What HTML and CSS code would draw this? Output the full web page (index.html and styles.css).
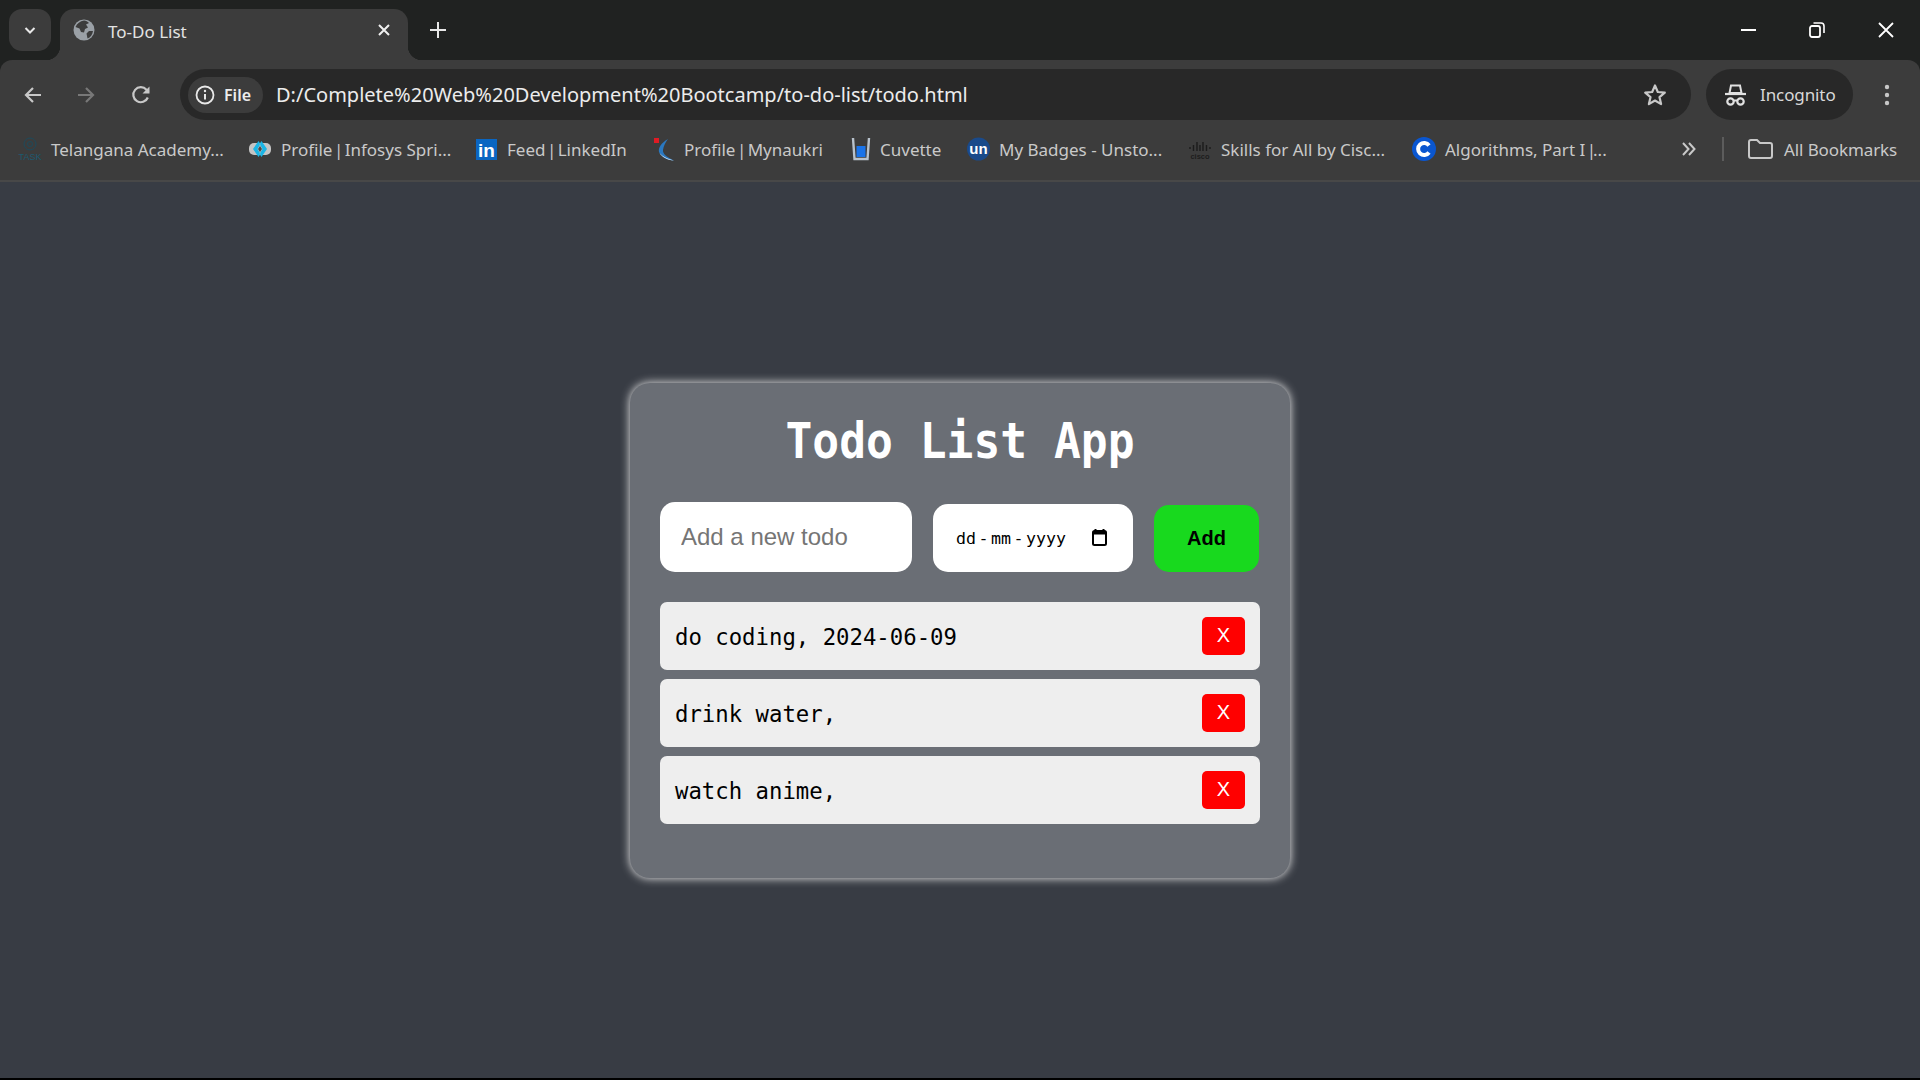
FILE: index.html
```html
<!DOCTYPE html>
<html lang="en">
<head>
<meta charset="utf-8">
<title>To-Do List</title>
<link rel="stylesheet" href="styles.css">
</head>
<body>
<header class="browser">
  <div class="tabstrip">
    <button class="tab-search" aria-label="Tab search">
      <svg width="14" height="14" viewBox="0 0 14 14"><path d="M2.500 5 7 9.500 11.500 5" fill="none" stroke="#e8e8e8" stroke-width="2"/></svg>
    </button>
    <div class="tab">
      <svg class="favicon" width="22" height="22" viewBox="0 0 22 22"><circle cx="11" cy="11" r="10.500" fill="#9aa0a6"/><path d="M11 1.500C7 2 4 4.500 2.500 8l4 1.500 1.500 3.500 3 .5 1-3.500 3-1.500-2-3 3-1.500C14.500 2.500 13 1.500 11 1.500zM20 12l-4 0-2.500 2.500 1 5C17.500 18.500 19.500 15.500 20 12z" fill="#3c3c3c"/></svg>
      <span class="tab-title">To-Do List</span>
      <svg class="tab-close" width="14" height="14" viewBox="0 0 14 14"><path d="M2 2 12 12M12 2 2 12" stroke="#f0f0f0" stroke-width="2"/></svg>
    </div>
    <svg class="new-tab" width="16" height="16" viewBox="0 0 16 16"><path d="M8 0V16M0 8H16" stroke="#e8e8e8" stroke-width="2"/></svg>
    <div class="window-buttons">
      <svg width="15" height="16" viewBox="0 0 15 16"><path d="M0 8H15" stroke="#fff" stroke-width="2"/></svg>
      <svg width="16" height="16" viewBox="0 0 16 16"><rect x="1" y="4" width="10" height="11" rx="2" fill="none" stroke="#fff" stroke-width="1.800"/><path d="M4.500 1H12a3 3 0 0 1 3 3V11" fill="none" stroke="#fff" stroke-width="1.600"/></svg>
      <svg width="16" height="16" viewBox="0 0 16 16"><path d="M1 1 15 15M15 1 1 15" stroke="#fff" stroke-width="1.800"/></svg>
    </div>
  </div>

  <div class="toolbar">
    <svg class="nav-back" width="20" height="20" viewBox="0 0 20 20"><path d="M18 10H3M10 3 3 10l7 7" fill="none" stroke="#c8c8c8" stroke-width="2.200"/></svg>
    <svg class="nav-forward" width="20" height="20" viewBox="0 0 20 20"><path d="M2 10H17M10 3l7 7-7 7" fill="none" stroke="#787878" stroke-width="2.200"/></svg>
    <svg class="nav-reload" width="20" height="20" viewBox="0 0 20 20"><path d="M16.800 12.500A7.500 7.500 0 1 1 15.500 4.800L17.500 7" fill="none" stroke="#c8c8c8" stroke-width="2.200"/><path d="M18.500 1.500V8.500H11.500z" fill="#c8c8c8"/></svg>
    <div class="omnibox">
      <div class="chip">
        <svg width="20" height="20" viewBox="0 0 20 20"><circle cx="10" cy="10" r="8.500" fill="none" stroke="#e8e8e8" stroke-width="1.800"/><path d="M10 9v5.500" stroke="#e8e8e8" stroke-width="2"/><circle cx="10" cy="6" r="1.200" fill="#e8e8e8"/></svg>
        <span>File</span>
      </div>
      <span class="url">D:/Complete%20Web%20Development%20Bootcamp/to-do-list/todo.html</span>
      <svg class="star" width="24" height="24" viewBox="0 0 24 24"><path d="M12 2.500 14.800 9l7 .6-5.300 4.600 1.600 6.900L12 17.500 5.900 21.100l1.600-6.900L2.200 9.600l7-.6z" fill="none" stroke="#c8c8c8" stroke-width="2.200" stroke-linejoin="round"/></svg>
    </div>
    <div class="incognito">
      <svg width="21" height="22" viewBox="0 0 21 22"><path d="M6 1.500h9l1.500 7.500h-12z" fill="none" stroke="#e0e0e0" stroke-width="2"/><path d="M0 10h21" stroke="#e0e0e0" stroke-width="2.200"/><circle cx="5.500" cy="17.500" r="3.200" fill="none" stroke="#e0e0e0" stroke-width="2.200"/><circle cx="15.500" cy="17.500" r="3.200" fill="none" stroke="#e0e0e0" stroke-width="2.200"/><path d="M8.500 16.500h4" stroke="#e0e0e0" stroke-width="2"/></svg>
      <span>Incognito</span>
    </div>
    <svg class="menu" width="6" height="22" viewBox="0 0 6 22"><circle cx="3" cy="3" r="2.200" fill="#c8c8c8"/><circle cx="3" cy="11" r="2.200" fill="#c8c8c8"/><circle cx="3" cy="19" r="2.200" fill="#c8c8c8"/></svg>
  </div>

  <nav class="bookmarks">
    <a class="bm">
      <svg class="bm-icon" width="24" height="24" viewBox="0 0 24 24"><circle cx="12" cy="7" r="6" fill="none" stroke="#1d4a5c" stroke-width="1"/><circle cx="12" cy="7" r="2.500" fill="none" stroke="#1d4a5c" stroke-width="1"/><text class="logo-task" x="12" y="23" text-anchor="middle">TASK</text></svg>
      <span>Telangana Academy...</span>
    </a>
    <a class="bm">
      <svg class="bm-icon" width="24" height="24" viewBox="0 0 24 24"><rect x="1" y="6" width="22" height="12" rx="5" fill="#c4c4c4"/><path d="M10.500 4 5 12l5.500 8 2-3-3-5 3-5zM13.500 4 19 12l-5.500 8-2-3 3-5-3-5z" fill="#19b5e6"/><path d="M12 9l-2 3 2 3 2-3z" fill="#4a4a4a"/></svg>
      <span>Profile <i class="pipe">|</i> Infosys Spri...</span>
    </a>
    <a class="bm">
      <svg class="bm-icon" width="22" height="22" viewBox="0 0 22 22"><rect width="21" height="21" y="1" fill="#0a66c2"/><text class="logo-in" x="10.500" y="19" text-anchor="middle">in</text></svg>
      <span>Feed <i class="pipe">|</i> LinkedIn</span>
    </a>
    <a class="bm">
      <svg class="bm-icon" width="22" height="24" viewBox="0 0 22 24"><path d="M15 2C8 6 5 11 6 15c2 5 8 8 15 8.500C14 20 9.500 17 10 13c.5-4 2.500-8 5-11z" fill="#2a78c0"/><path d="M21 23.500C14 23 9 20 6.500 16 9 19 14 22 21 23.500z" fill="#dfe9f2"/><rect x="1" y="1" width="5" height="5" fill="#e01b24"/></svg>
      <span>Profile <i class="pipe">|</i> Mynaukri</span>
    </a>
    <a class="bm">
      <svg class="bm-icon" width="20" height="24" viewBox="0 0 20 24"><path d="M2 1 3.500 22H16.500L18 1" fill="none" stroke="#b8c2cc" stroke-width="2.400"/><rect x="5.500" y="9" width="9" height="11" fill="#1a73e8"/></svg>
      <span>Cuvette</span>
    </a>
    <a class="bm">
      <svg class="bm-icon" width="23" height="24" viewBox="0 0 23 24"><circle cx="11.500" cy="12" r="11.500" fill="#1a4a8a"/><text class="logo-un" x="11.500" y="17" text-anchor="middle">un</text></svg>
      <span>My Badges - Unsto...</span>
    </a>
    <a class="bm">
      <svg class="bm-icon" width="24" height="24" viewBox="0 0 24 24"><path d="M2 10v2M5.500 8v6M9 5v9M12 8v6M15 5v9M18.500 8v6M22 10v2" stroke="#1c1c1c" stroke-width="1.400"/><text class="logo-cisco" x="12" y="22" text-anchor="middle">cisco</text></svg>
      <span>Skills for All by Cisc...</span>
    </a>
    <a class="bm">
      <svg class="bm-icon" width="24" height="24" viewBox="0 0 24 24"><circle cx="12" cy="12" r="12" fill="#0a56d0"/><path d="M17 8.500A6 6 0 1 0 17 15.500" fill="none" stroke="#fff" stroke-width="4"/></svg>
      <span>Algorithms, Part I <i class="pipe">|</i>...</span>
    </a>
    <div class="bm-end">
      <svg class="more" width="15" height="14" viewBox="0 0 15 14"><path d="M2 1 7.500 7 2 13M8 1l5.500 6L8 13" fill="none" stroke="#c8c8c8" stroke-width="2"/></svg>
      <i class="sep"></i>
      <svg class="folder" width="25" height="20" viewBox="0 0 25 20"><path d="M1 3a2 2 0 0 1 2-2h6l3 3h10a2 2 0 0 1 2 2v11a2 2 0 0 1-2 2H3a2 2 0 0 1-2-2z" fill="none" stroke="#c8c8c8" stroke-width="2"/></svg>
      <span>All Bookmarks</span>
    </div>
  </nav>
</header>

<main class="page">
  <section class="card">
    <h1 class="title">Todo List App</h1>
    <form class="add-form">
      <input class="todo-input" type="text" placeholder="Add a new todo">
      <div class="date-input">
        <span class="date-text">dd<b>-</b>mm<b>-</b>yyyy</span>
        <svg width="15" height="17" viewBox="0 0 15 17"><path d="M3.500 0v3M11.500 0v3" stroke="#000" stroke-width="2"/><rect x="1" y="2" width="13" height="14" rx="1.500" fill="#fff" stroke="#000" stroke-width="2"/><rect x="1" y="2" width="13" height="3.500" fill="#000"/></svg>
      </div>
      <button class="add-btn" type="button">Add</button>
    </form>
    <ul class="todos">
      <li class="todo"><span>do coding, 2024-06-09</span><button class="del" type="button">X</button></li>
      <li class="todo"><span>drink water,</span><button class="del" type="button">X</button></li>
      <li class="todo"><span>watch anime,</span><button class="del" type="button">X</button></li>
    </ul>
  </section>
</main>
</body>
</html>
```
FILE: styles.css
```css
* { box-sizing: border-box; }
html, body { margin: 0; height: 100%; }
body {
  display: flex;
  flex-direction: column;
  height: 1080px;
  padding-bottom: 2px;
  background: #000;
  overflow: hidden;
  font-family: "Noto Sans", sans-serif;
}

/* Browser chrome */
.browser { background: #202221; flex: none; }
.tabstrip {
  height: 60px;
  display: flex;
  align-items: flex-start;
  padding: 9px 0 0 9px;
}
.tab-search {
  width: 42px;
  height: 42px;
  border: 0;
  border-radius: 13px;
  background: #3c3c3c;
  display: flex;
  align-items: center;
  justify-content: center;
  padding: 0;
}
.tab {
  position: relative;
  width: 348px;
  height: 51px;
  margin-left: 9px;
  background: #3c3c3c;
  border-radius: 14px 14px 0 0;
  display: flex;
  align-items: center;
  padding: 0 17px 9px 13px;
  color: #e3e3e3;
}
.tab::before, .tab::after {
  content: "";
  position: absolute;
  bottom: 0;
  width: 14px;
  height: 14px;
}
.tab::before { left: -14px; background: radial-gradient(circle at 0 0, transparent 14px, #3c3c3c 14.500px); }
.tab::after { right: -14px; background: radial-gradient(circle at 100% 0, transparent 14px, #3c3c3c 14.500px); }
.tab-title { margin: 2px 0 0 13px; font-size: 17px; flex: 1; }
.new-tab { margin: 13px 0 0 22px; }
.window-buttons {
  margin-left: auto;
  display: flex;
  gap: 53px;
  padding: 13px 26px 0 0;
  align-items: center;
}

.toolbar {
  height: 60px;
  background: #3c3c3c;
  border-radius: 12px 12px 0 0;
  display: flex;
  align-items: center;
  padding: 9px 0 0 23px;
}
.nav-forward { margin-left: 33px; }
.nav-reload { margin-left: 35px; }
.omnibox {
  width: 1511px;
  height: 51px;
  margin: 0 0 0 29px;
  border-radius: 26px;
  background: #282828;
  display: flex;
  align-items: center;
  padding: 0 24px 0 8px;
  color: #ececec;
}
.chip {
  width: 75px;
  height: 36px;
  border-radius: 18px;
  background: #3c3c3c;
  display: flex;
  align-items: center;
  gap: 9px;
  padding-left: 7px;
  font-size: 16px;
  font-weight: 600;
}
.url { margin-left: 13px; font-size: 20px; flex: 1; white-space: nowrap; }
.incognito {
  width: 147px;
  height: 51px;
  margin-left: 15px;
  border-radius: 26px;
  background: #282828;
  display: flex;
  align-items: center;
  padding-left: 19px;
  gap: 14px;
  color: #d8d8d8;
  font-size: 17px;
  letter-spacing: -0.1px;
}
.menu { margin-left: 31px; }

.bookmarks {
  height: 62px;
  background: #3c3c3c;
  border-bottom: 2px solid #484848;
  display: grid;
  grid-template-columns: 230px 228px 177px 198px 116px 221px 224px 269px 1fr;
  align-items: center;
  padding: 0 0 2px 18px;
  color: #c9c9c9;
  font-size: 17px;
}
.bm { display: flex; align-items: center; gap: 9px; white-space: nowrap; }
.pipe { font-style: normal; margin: 0 -3px; }
.bm-end { display: flex; align-items: center; white-space: nowrap; }
.sep { width: 2px; height: 24px; background: #5c5c5c; margin: 0 24px 0 26px; }
.bm-end span { margin-left: 11px; letter-spacing: -0.1px; }
.logo-task { font: 9px "Liberation Sans", sans-serif; fill: #1d5a70; }
.logo-in { font: bold 19px "Liberation Sans", sans-serif; fill: #fff; }
.logo-un { font: bold 15px "Liberation Sans", sans-serif; fill: #fff; }
.logo-cisco { font: bold 7.500px "Liberation Sans", sans-serif; fill: #1c1c1c; }

/* Page */
.page {
  flex: 1;
  background: #383c44;
  display: flex;
  align-items: center;
  justify-content: center;
}
.card {
  width: 660px;
  height: 495px;
  padding: 0 30px;
  border-radius: 20px;
  background: #6a6e75;
  box-shadow: 0 0 10px #f0f0f0;
  font-family: "DejaVu Sans Mono", monospace;
}
.title {
  margin: 0;
  height: 119px;
  padding-top: 27px;
  text-align: center;
  font-size: 44.600px;
  line-height: 64px;
  font-weight: 700;
  color: #fff;
  transform: scaleY(1.1);
}
.add-form {
  display: flex;
  align-items: flex-end;
  gap: 21px;
  height: 70px;
  margin-bottom: 30px;
}
.todo-input {
  width: 252px;
  height: 70px;
  border: 0;
  border-radius: 15px;
  padding: 0 21px;
  background: #fff;
  font: 24px "Liberation Sans", sans-serif;
  outline: none;
}
.todo-input::placeholder { color: #757575; opacity: 1; }
.date-input {
  width: 200px;
  height: 68px;
  border-radius: 15px;
  background: #fff;
  display: flex;
  align-items: center;
  justify-content: space-between;
  padding: 0 26px 0 23px;
  color: #000;
  font-size: 16.600px;
}
.date-text { padding-top: 2px; }
.date-text b { font-weight: 400; margin: 0 2.500px; }
.add-btn {
  width: 105px;
  height: 67px;
  border: 0;
  border-radius: 15px;
  background: #18d91e;
  color: #000;
  font: bold 20px "Liberation Sans", sans-serif;
  padding: 0;
}
.todos {
  list-style: none;
  margin: 0;
  padding: 0;
  display: flex;
  flex-direction: column;
  gap: 9px;
}
.todo {
  height: 68px;
  border-radius: 7px;
  background: #eee;
  display: flex;
  align-items: center;
  justify-content: space-between;
  padding: 0 15px;
  color: #000;
  font-size: 22.300px;
}
.todo span { padding-top: 2px; }
.del {
  width: 43px;
  height: 38px;
  border: 0;
  border-radius: 5px;
  background: #f00;
  color: #fff;
  font: 20px "Liberation Sans", sans-serif;
  padding: 0;
}
```
